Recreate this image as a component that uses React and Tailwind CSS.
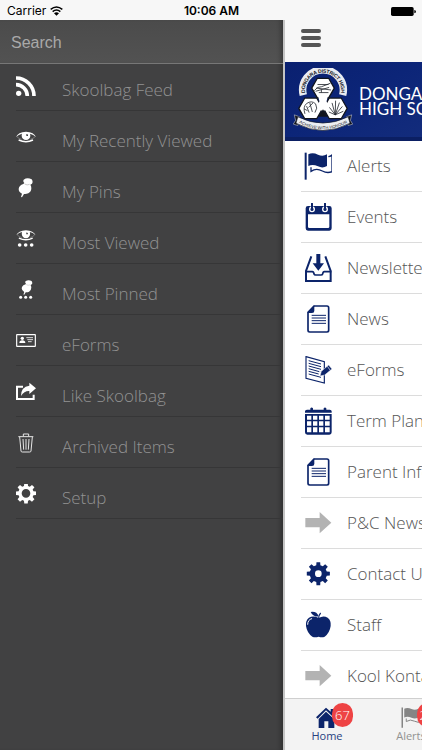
import React from "react";

const NAVY = "#0c246a";

/* ---------- drawer icons (60 x 60 grid) ---------- */

function DrawerSvg({ children }) {
  return (
    <svg viewBox="0 0 60 60" className="size-5 shrink-0" fill="#fff" stroke="none" aria-hidden="true">
      {children}
    </svg>
  );
}

function EyeShape() {
  return (
    <g>
      <path d="M0 30 Q6 15 30 14 Q54 15 60 30 Q52 22 42 20 Q43 23 43 26 A13 13 0 0 1 17 26 Q17 23 18 20 Q8 22 0 30Z M31 21 V27 H36 V23 Q35 21 31 21Z" fillRule="evenodd" />
      <path d="M8 39 Q30 49 51 39" fill="none" stroke="#fff" strokeWidth="4.5" />
      <path d="M3 29 Q9 36 17 37 M57 29 Q51 36 43 37" fill="none" stroke="#fff" strokeWidth="2" opacity="0.45" />
    </g>
  );
}

function PinShape() {
  return (
    <g>
      <path d="M23 5 Q34 -3 47 4 Q52 11 48 17 L43 20 Q46 24 46 31 Q46 41 37 46 Q30 49 24 48 L18 58 L15 57 L18 47 Q8 42 8 33 Q9 22 22 18 L25 15 Q20 10 23 5Z" />
      <path d="M26 18 Q33 23 41 19" fill="none" stroke="#999" strokeWidth="1.5" />
    </g>
  );
}

const gearPath = (cx, cy, outer, inner, hole, half, tip) => {
  const pts = [];
  for (let i = 0; i < 8; i++) {
    const a = (i * Math.PI) / 4 - Math.PI / 2;
    [[inner, -half], [outer, -tip], [outer, tip], [inner, half]].forEach(([r, d]) =>
      pts.push(`${(cx + r * Math.cos(a + d)).toFixed(1)} ${(cy + r * Math.sin(a + d)).toFixed(1)}`)
    );
  }
  return `M${pts.join("L")}ZM${cx - hole} ${cy}a${hole} ${hole} 0 1 0 ${hole * 2} 0a${hole} ${hole} 0 1 0 ${-hole * 2} 0Z`;
};

const drawerItems = [
  {
    label: "Skoolbag Feed",
    icon: (
      <DrawerSvg>
        <circle cx="8" cy="52" r="8" />
        <g fill="none" stroke="#fff" strokeWidth="11">
          <path d="M0 26 A34 34 0 0 1 34 60" />
          <path d="M0 6 A54 54 0 0 1 54 60" />
        </g>
      </DrawerSvg>
    ),
  },
  { label: "My Recently Viewed", icon: <DrawerSvg><EyeShape /></DrawerSvg> },
  { label: "My Pins", icon: <DrawerSvg><PinShape /></DrawerSvg> },
  {
    label: "Most Viewed",
    icon: (
      <DrawerSvg>
        <g transform="translate(1 -10) scale(.96)"><EyeShape /></g>
        <circle cx="11" cy="48" r="5.5" />
        <circle cx="29" cy="48" r="5.5" />
        <circle cx="47" cy="48" r="5.5" />
      </DrawerSvg>
    ),
  },
  {
    label: "Most Pinned",
    icon: (
      <DrawerSvg>
        <g transform="translate(11 0) scale(.76)"><PinShape /></g>
        <circle cx="14" cy="52" r="4.5" />
        <circle cx="29" cy="52" r="4.5" />
        <circle cx="44" cy="52" r="4.5" />
      </DrawerSvg>
    ),
  },
  {
    label: "eForms",
    icon: (
      <DrawerSvg>
        <rect x="2" y="11" width="56" height="35" rx="1" fill="none" stroke="#fff" strokeWidth="3.5" />
        <circle cx="19" cy="22" r="5" />
        <path d="M10 36 Q10 28 19 28 Q28 28 28 36Z" />
        <path d="M31 20 H51 M34 26 H51 M36 32 H47" stroke="#fff" strokeWidth="2.5" />
      </DrawerSvg>
    ),
  },
  {
    label: "Like Skoolbag",
    icon: (
      <DrawerSvg>
        <path d="M21 14 H3 V51 H53 V38" fill="none" stroke="#fff" strokeWidth="6" />
        <path d="M40 2 L60 19 L40 36 V27 Q25 26 15 42 Q15 14 40 11Z" />
      </DrawerSvg>
    ),
  },
  {
    label: "Archived Items",
    icon: (
      <DrawerSvg>
        <g fill="none" stroke="#e6e6e6" strokeWidth="3">
          <path d="M7 11 H52 M11 12 L15 54 Q15 57 19 57 H41 Q45 57 45 54 L49 12" />
          <path d="M22 10 V3 H38 V10" />
          <path d="M21 18 L23 50 M30 18 V50 M39 18 L37 50" />
        </g>
      </DrawerSvg>
    ),
  },
  {
    label: "Setup",
    icon: (
      <DrawerSvg>
        <path fillRule="evenodd" d={gearPath(30, 28, 31, 23, 13, 0.27, 0.17)} />
      </DrawerSvg>
    ),
  },
];

/* ---------- school menu icons (84 x 84 grid) ---------- */

function MenuSvg({ children }) {
  return (
    <svg viewBox="0 0 84 84" className="size-7 shrink-0" fill={NAVY} stroke="none" aria-hidden="true">
      {children}
    </svg>
  );
}

function FlagShape({ color = NAVY }) {
  return (
    <g fill={color}>
      <rect x="2" y="2" width="6" height="81" />
      <path d="M13 7 Q26 0 42 8 Q56 15 69 7 V42 Q56 50 42 43 Q26 36 13 42Z" />
      <path d="M73 14 Q79 14 84 9 V59 Q70 65 55 57 Q37 47 21 58 V46" fill="none" stroke={color} strokeWidth="4" />
    </g>
  );
}

function DocumentIcon() {
  return (
    <MenuSvg>
      <path d="M30 3 H69 Q74 3 74 8 V76 Q74 81 69 81 H17 Q12 81 12 76 V22Z" fill="none" stroke={NAVY} strokeWidth="5" />
      <path d="M10 24 L31 1 V17 Q31 24 24 24Z" />
      <path d="M23 31 H66 M23 39 H66 M23 47 H66 M23 55 H66" stroke={NAVY} strokeWidth="3" />
    </MenuSvg>
  );
}

function ArrowIcon() {
  return (
    <MenuSvg>
      <path d="M4 27 H47 V9 L82 41 L47 73 V55 H4Z" fill="#b3b3b3" />
    </MenuSvg>
  );
}

const menuItems = [
  { label: "Alerts", icon: <MenuSvg><FlagShape /></MenuSvg> },
  {
    label: "Events",
    icon: (
      <MenuSvg>
        <path fillRule="evenodd" d="M12 9 H76 Q83 9 83 16 V76 Q83 83 76 83 H12 Q5 83 5 76 V16 Q5 9 12 9Z M12 34 V71 Q12 75 16 75 H72 Q76 75 76 71 V34Z" />
        <g fill="none" stroke="#fff" strokeWidth="4">
          <circle cx="24" cy="19" r="7" />
          <circle cx="63" cy="19" r="7" />
        </g>
        <path d="M24 2 V20 M63 2 V20" stroke={NAVY} strokeWidth="6" strokeLinecap="round" />
      </MenuSvg>
    ),
  },
  {
    label: "Newsletters",
    icon: (
      <MenuSvg>
        <path d="M22 7 L6 51 V81 H80 V51 L64 7" fill="none" stroke={NAVY} strokeWidth="6" />
        <path d="M4 53 H25 Q29 53 30 60 Q31 63 35 63 H51 Q55 63 56 60 Q57 53 61 53 H82" fill="none" stroke={NAVY} strokeWidth="5" />
        <path d="M37 0 H49 V28 H60 L43 50 L26 28 H37Z" />
      </MenuSvg>
    ),
  },
  { label: "News", icon: <DocumentIcon /> },
  {
    label: "eForms",
    icon: (
      <MenuSvg>
        <path d="M6 2 L61 17 V81 L6 67Z" fill="none" stroke={NAVY} strokeWidth="3.5" />
        <path d="M14 14 L51 24 M14 22 L51 32 M14 30 L51 40 M14 38 L46 47 M14 46 L44 54 M14 54 L51 64" stroke={NAVY} strokeWidth="3" />
        <path d="M74 27 L84 39 L62 57 L48 60 L52 46Z" stroke="#fff" strokeWidth="1.5" />
        <path d="M70 31 L79 43" stroke="#fff" strokeWidth="2" />
      </MenuSvg>
    ),
  },
  {
    label: "Term Planner",
    icon: (
      <MenuSvg>
        <path d="M3 17 V13 Q3 8 9 8 H19 V4 Q23 -1 27 4 V8 H59 V4 Q63 -1 67 4 V8 H77 Q83 8 83 13 V17Z" />
        <path fillRule="evenodd" d="M3 21 H83 V76 Q83 83 76 83 H10 Q3 83 3 76Z M9 26 V38 H22 V26Z M27 26 V38 H40 V26Z M45 26 V38 H58 V26Z M63 26 V38 H77 V26Z M9 43 V56 H22 V43Z M27 43 V56 H40 V43Z M45 43 V56 H58 V43Z M63 43 V56 H77 V43Z M9 61 V76 H22 V61Z M27 61 V76 H40 V61Z M45 61 V76 H58 V61Z M63 61 V76 H77 V61Z" />
      </MenuSvg>
    ),
  },
  { label: "Parent Info", icon: <DocumentIcon /> },
  { label: "P&C News", icon: <ArrowIcon /> },
  {
    label: "Contact Us",
    icon: (
      <MenuSvg>
        <path fillRule="evenodd" d={gearPath(43, 41, 35, 26, 10, 0.24, 0.16)} />
      </MenuSvg>
    ),
  },
  {
    label: "Staff",
    icon: (
      <MenuSvg>
        <path d="M44 21 Q58 12 71 20 Q82 28 80 45 Q77 66 62 77 Q54 81 44 77 Q33 81 25 77 Q9 66 6 45 Q4 28 15 20 Q28 13 44 21Z" />
        <path d="M20 3 Q38 0 44 16 Q28 19 20 3Z" />
        <path d="M44 22 Q44 12 50 6" fill="none" stroke={NAVY} strokeWidth="3.5" />
        <path d="M11 40 Q11 26 23 23" fill="none" stroke="#fff" strokeWidth="3" strokeLinecap="round" />
      </MenuSvg>
    ),
  },
  { label: "Kool Kontacts", icon: <ArrowIcon /> },
];

/* ---------- school crest (186 x 198 grid) ---------- */

function Crest() {
  const hex = (cx, cy, r) =>
    [0, 1, 2, 3, 4, 5]
      .map((i) => `${cx + r * Math.cos((i * Math.PI) / 3)},${cy + r * Math.sin((i * Math.PI) / 3)}`)
      .join(" ");
  return (
    <svg viewBox="0 0 186 198" className="h-16 w-[60px] shrink-0" role="img" aria-label="Dongara District High School crest">
      <defs>
        <path id="crest-arc" d="M34 86 A61 61 0 1 1 152 86" />
        <path id="crest-ribbon" d="M19 168 Q92 208 168 168" />
      </defs>
      <path d="M32 84 A63 63 0 1 1 154 84" fill="none" stroke="#e9ebf0" strokeWidth="23" />
      <text fontFamily="Liberation Sans, sans-serif" fontWeight="700" fontSize="16" fill="#15171f" dy="5">
        <textPath href="#crest-arc" startOffset="50%" textAnchor="middle">DONGARA DISTRICT HIGH</textPath>
      </text>
      <g fill="#fff" stroke="#11141d" strokeWidth="4">
        <polygon points={hex(93, 62, 35)} />
        <polygon points={hex(55, 125, 37)} />
        <polygon points={hex(131, 125, 37)} />
      </g>
      <path d="M76 80 H110 L104 103 L112 124 L93 134 L74 124 L82 103Z" fill="#fff" />
      <path d="M93 128 L108 151 H78Z" fill="#11141d" />
      <g fill="none" stroke="#20242c" strokeWidth="2.5">
        <path d="M66 70 Q76 56 88 58 L116 47 M70 72 L112 60 M76 51 L110 51 M80 76 H110 M72 62 L118 68 M88 76 V67" />
        <path d="M37 142 Q30 120 42 110 Q58 99 70 111 Q78 124 68 138 M42 118 L50 138 M52 108 L60 136 M62 108 L48 122 M35 127 L45 132" />
        <path d="M131 145 L121 108 M131 145 L132 101 M131 145 L144 107 M131 145 L113 122 M131 145 L153 119 M131 145 L111 136 M131 145 L156 134" />
      </g>
      <path d="M4 145 L20 151 L15 178 L1 174 L8 162Z M182 145 L166 151 L171 178 L185 174 L178 162Z" fill="#11141d" stroke="#e9ebf0" strokeWidth="1.5" />
      <path d="M15 151 Q92 190 171 151 L177 171 Q92 216 9 171Z" fill="#eceef2" stroke="#11141d" strokeWidth="2" />
      <text fontFamily="Liberation Sans, sans-serif" fontSize="13" fill="#15171f" dy="2">
        <textPath href="#crest-ribbon" startOffset="50%" textAnchor="middle">ACHIEVE WITH HONOUR</textPath>
      </text>
    </svg>
  );
}

function HomeIcon() {
  return (
    <svg viewBox="0 0 66 63" className="h-[21px] w-[22px]" fill={NAVY} aria-hidden="true">
      <path d="M30 2 L44 14 V6 H54 V22 L62 31 L57 35 L30 10 L5 35 L0 31Z" />
      <path d="M30 14 L55 37 V63 H37 V43 H25 V63 H8 V36Z" />
    </svg>
  );
}

function Tab({ label, badge, active, children }) {
  return (
    <button
      type="button"
      className={`flex w-[84px] shrink-0 flex-col items-center pt-2 text-[11px] leading-4 ${active ? "text-[#27407f]" : "text-[#929292]"}`}
    >
      <span className="relative flex h-[21px] justify-center">
        {children}
        <span className="absolute -top-1 left-4 flex h-6 w-[21px] items-center justify-center rounded-full bg-[#ee4344] text-[13px] font-light text-white">
          {badge}
        </span>
      </span>
      <span>{label}</span>
    </button>
  );
}

function StatusBar() {
  return (
    <div className="grid h-5 shrink-0 grid-cols-3 items-center bg-[#f7f7f7] pt-px pr-[6px] pl-[7px] font-[Inter,'Liberation_Sans',sans-serif] text-[12px] leading-5 text-black">
      <div className="flex items-center gap-1">
        <span>Carrier</span>
        <svg viewBox="0 0 39 30" className="h-[10px] w-[13px]" fill="none" stroke="#000" strokeWidth="4.5" aria-hidden="true">
          <path d="M2 10 Q19.500 -4 37 10" />
          <path d="M8 17 Q19.500 7 31 17" />
          <path d="M12 22 Q19.500 15 27 22 L19.500 29Z" fill="#000" stroke="none" />
        </svg>
      </div>
      <div className="text-center font-semibold">10:06 AM</div>
      <svg viewBox="0 0 75 27" className="h-[9px] w-[25px] justify-self-end" aria-hidden="true">
        <rect width="68" height="27" rx="5" />
        <path d="M70 9 Q75 10 75 14 Q75 18 70 19Z" />
      </svg>
    </div>
  );
}

export default function App() {
  return (
    <div className="flex h-screen flex-col overflow-hidden bg-[#f7f7f7] font-['Open_Sans','Noto_Sans',sans-serif]">
      <StatusBar />
      <div className="flex min-h-0 flex-1">
        <aside className="w-[283px] shrink-0 bg-[#414142] shadow-[inset_-5px_0_5px_-3px_rgba(0,0,0,0.3)]">
          <div className="border-b border-[#777] bg-linear-to-b from-[#4b4b4b] to-[#525252] shadow-[inset_-5px_0_5px_-3px_rgba(0,0,0,0.3)]">
            <input
              type="search"
              aria-label="Search"
              placeholder="Search"
              className="block h-[43px] w-full bg-transparent px-[11px] pt-0.5 font-['Liberation_Sans',sans-serif] text-[16px] text-white outline-none placeholder:text-[#a9a9a9]"
            />
          </div>
          <ul className="pl-4">
            {drawerItems.map((item) => (
              <li key={item.label} className="border-b border-[#363637] pt-4 pb-[6px] first:pt-3">
                <button type="button" className="flex w-full items-start gap-[26px] text-left">
                  {item.icon}
                  <span className="text-[17px] leading-7 font-light whitespace-nowrap text-[#929292]">{item.label}</span>
                </button>
              </li>
            ))}
          </ul>
        </aside>

        <main className="flex min-w-0 flex-1 flex-col overflow-hidden border-l-2 border-[#c4c4c4] bg-white">
          <header className="flex h-[42px] shrink-0 items-center bg-[#f7f7f7] px-4">
            <button type="button" aria-label="Menu" className="flex w-5 flex-col gap-[3px] pb-[6px]">
              <span className="h-1 rounded-full bg-[#555]" />
              <span className="h-1 rounded-full bg-[#555]" />
              <span className="h-1 rounded-full bg-[#555]" />
            </button>
          </header>

          <div className="flex h-[79px] shrink-0 items-center gap-[6px] border-b-4 border-[#0b1f63] bg-linear-to-br from-[#0a2070] via-[#0c2578] to-[#132c7c] pl-2 text-white">
            <Crest />
            <h1 className="pt-0.5 font-[Lato,sans-serif] text-[17px] leading-[15px] whitespace-nowrap">
              DONGARA DISTRICT
              <br />
              HIGH SCHOOL
            </h1>
          </div>

          <ul className="min-h-0 flex-1 overflow-hidden pl-4">
            {menuItems.map((item) => (
              <li key={item.label} className="h-[51px] border-b border-[#dcdcdc]">
                <button type="button" className="flex h-full w-full items-center gap-[15px] pl-[3px] text-left">
                  {item.icon}
                  <span className="text-[17px] leading-6 font-light whitespace-nowrap text-[#555]">{item.label}</span>
                </button>
              </li>
            ))}
          </ul>

          <nav className="flex h-[52px] shrink-0 overflow-hidden border-t border-[#cfcfcf] bg-[#f3f3f3]">
            <Tab label="Home" badge="67" active>
              <HomeIcon />
            </Tab>
            <Tab label="Alerts" badge="25">
              <svg viewBox="0 0 84 84" className="size-[21px]" aria-hidden="true">
                <FlagShape color="#858585" />
              </svg>
            </Tab>
          </nav>
        </main>
      </div>
    </div>
  );
}
